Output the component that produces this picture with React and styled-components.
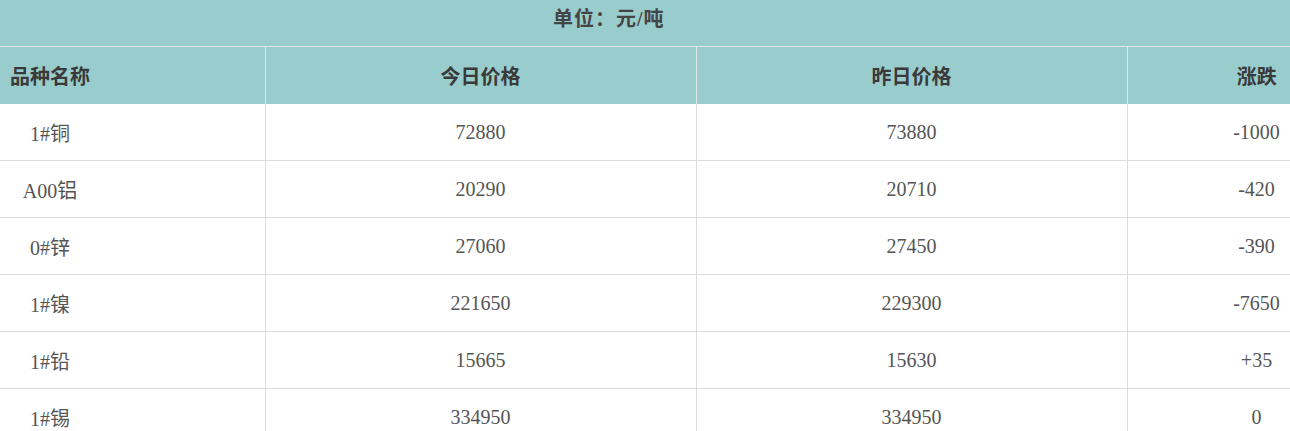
import React from 'react'
import styled, { createGlobalStyle } from 'styled-components'

const GlobalStyle = createGlobalStyle`
    body {
        margin: 0;
        background: #fff;
        overflow: hidden;
        font-family: "Liberation Serif", "Noto Sans CJK SC", serif;
    }
`

const rows = [
    { name: '1#铜', today: '72880', yesterday: '73880', change: '-1000' },
    { name: 'A00铝', today: '20290', yesterday: '20710', change: '-420' },
    { name: '0#锌', today: '27060', yesterday: '27450', change: '-390' },
    { name: '1#镍', today: '221650', yesterday: '229300', change: '-7650' },
    { name: '1#铅', today: '15665', yesterday: '15630', change: '+35' },
    { name: '1#锡', today: '334950', yesterday: '334950', change: '0' },
]

const App = () => {
    return (
      <Wrapper>
          <GlobalStyle />
          <Unit>单位：元/吨</Unit>
          <Table>
              <colgroup>
                  <col style={{ width: 265 }} />
                  <col style={{ width: 431 }} />
                  <col style={{ width: 431 }} />
                  <col style={{ width: 259 }} />
              </colgroup>
              <thead>
                  <tr>
                      <Th><Name>品种名称</Name></Th>
                      <Th>今日价格</Th>
                      <Th>昨日价格</Th>
                      <Th>涨跌</Th>
                  </tr>
              </thead>
              <tbody>
                  {rows.map(r => (
                      <tr key={r.name}>
                          <Td><Name>{r.name}</Name></Td>
                          <Td>{r.today}</Td>
                          <Td>{r.yesterday}</Td>
                          <Td>{r.change}</Td>
                      </tr>
                  ))}
              </tbody>
          </Table>
      </Wrapper>
    )
}

export default App

const Wrapper = styled.div`
    width: 1386px;
`

const Unit = styled.div`
    height: 47px;
    box-sizing: border-box;
    padding-left: 553px;
    line-height: 38px;
    background-color: #99cccc;
    border-bottom: 1px solid #dde6e6;
    color: #444;
    font-size: 20px;
    font-weight: bold;
    letter-spacing: 1px;
`

const Table = styled.table`
    width: 1386px;
    border-collapse: collapse;
    table-layout: fixed;
`

const Th = styled.th`
    height: 57px;
    padding: 0;
    background-color: #99cccc;
    border-left: 1px solid #dde6e6;
    color: #3a3a3a;
    font-size: 20px;
    font-weight: bold;
    text-align: center;
    &:first-child{
        border-left: none;
    }
`

const Td = styled.td`
    height: 56px;
    padding: 0;
    border: 1px solid #dcdcdc;
    border-top: none;
    color: #555;
    font-size: 20px;
    text-align: center;
    &:first-child{
        border-left: none;
    }
`

const Name = styled.div`
    width: 100px;
    text-align: center;
`
